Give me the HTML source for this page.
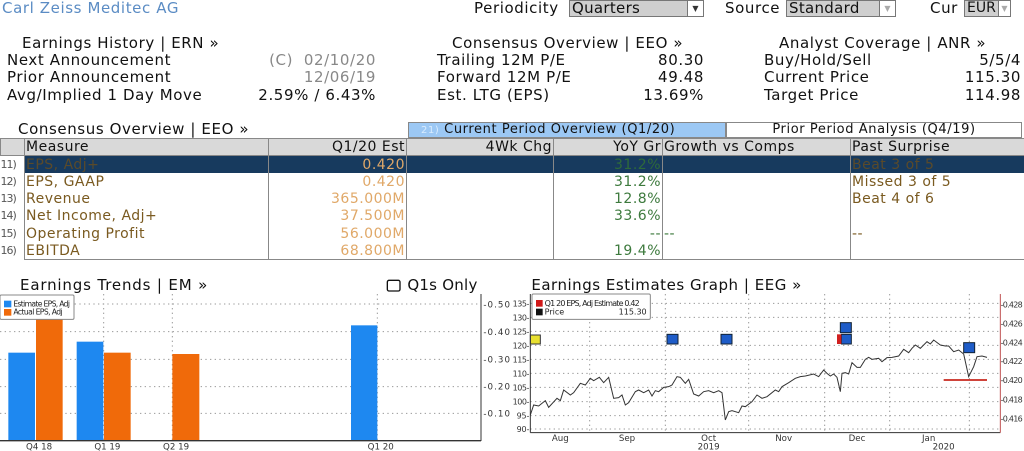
<!DOCTYPE html>
<html><head><meta charset="utf-8">
<style>
*{margin:0;padding:0;box-sizing:border-box}
body{width:1024px;height:451px;overflow:hidden;background:#fff;font-family:"DejaVu Sans","Liberation Sans",sans-serif;color:#111;position:relative}
.a{position:absolute;white-space:nowrap;font-size:15px;line-height:17px;letter-spacing:0.6px}
.r{text-align:right}
.dd{position:absolute;top:0;height:17px;background:#cfcfcf;border:1px solid #777;font-size:15px;line-height:15px;padding-left:2px;letter-spacing:0.3px;overflow:hidden}
.dd i{position:absolute;right:0;top:0;width:16px;height:15px;background:#fff;border-left:1px solid #777;font-style:normal;font-size:8px;text-align:center;line-height:15px;color:#333;letter-spacing:0}
table{position:absolute;left:0;top:138px;width:1024px;border-collapse:collapse;font-size:14px;letter-spacing:0.5px;table-layout:fixed}
td{height:17.3px;line-height:16px;padding:0 1px;white-space:nowrap;overflow:hidden;border-left:1px solid #888;border-right:1px solid #888}
tr.h td{background:#d9d9d9;border:1px solid #888}
tr.s td.x{background:#173a5e;color:#5a4a2a}
.n{font-size:11px;color:#555;border-left:none;letter-spacing:-1px;width:24px;padding:0}
.m{color:#7a5a20;width:244px}
.e{color:#e0a868;text-align:right;width:138px}
.w{width:147px}
.y{color:#3d7a3d;text-align:right;width:109px}
.g{width:188px;color:#3d7a3d}
.p{color:#7a5a20;width:174px}
tr.last td{border-bottom:1px solid #888}
</style></head><body>
<div class="a" style="left:2px;top:0;color:#5b8cc4">Carl Zeiss Meditec AG</div>
<div class="a" style="left:474px;top:0">Periodicity</div>
<div class="dd" style="left:569px;width:135px">Quarters<i>▼</i></div>
<div class="a" style="left:725px;top:0">Source</div>
<div class="dd" style="left:786px;width:110px">Standard<i style="color:#aaa">▼</i></div>
<div class="a" style="left:930px;top:0">Cur</div>
<div class="dd" style="left:964px;width:47px;letter-spacing:0;font-size:14px">EUR<i style="color:#aaa;width:12px">▼</i></div>

<div class="a" style="left:22px;top:35px">Earnings History | ERN »</div>
<div class="a" style="left:7px;top:52px">Next Announcement</div>
<div class="a" style="left:7px;top:69px">Prior Announcement</div>
<div class="a" style="left:7px;top:87px">Avg/Implied 1 Day Move</div>
<div class="a r" style="right:648px;top:52px;color:#888">(C)&nbsp; 02/10/20</div>
<div class="a r" style="right:648px;top:69px;color:#888">12/06/19</div>
<div class="a r" style="right:648px;top:87px">2.59% / 6.43%</div>

<div class="a" style="left:452px;top:35px">Consensus Overview | EEO »</div>
<div class="a" style="left:437px;top:52px">Trailing 12M P/E</div>
<div class="a" style="left:437px;top:69px">Forward 12M P/E</div>
<div class="a" style="left:437px;top:87px">Est. LTG (EPS)</div>
<div class="a r" style="right:320px;top:52px">80.30</div>
<div class="a r" style="right:320px;top:69px">49.48</div>
<div class="a r" style="right:320px;top:87px">13.69%</div>

<div class="a" style="left:779px;top:35px">Analyst Coverage | ANR »</div>
<div class="a" style="left:764px;top:52px">Buy/Hold/Sell</div>
<div class="a" style="left:764px;top:69px">Current Price</div>
<div class="a" style="left:764px;top:87px">Target Price</div>
<div class="a r" style="right:3px;top:52px">5/5/4</div>
<div class="a r" style="right:3px;top:69px">115.30</div>
<div class="a r" style="right:3px;top:87px">114.98</div>

<div class="a" style="left:18px;top:121px">Consensus Overview | EEO »</div>
<div class="a" style="left:408px;top:122px;width:318px;height:16px;background:#9cc8f4;border:1px solid #888;font-size:13px;line-height:14px;padding-left:12px"><span style="color:#d8ecff;font-size:10px">21)</span> Current Period Overview (Q1/20)</div>
<div class="a" style="left:726px;top:122px;width:296px;height:16px;border:1px solid #888;font-size:13px;line-height:14px;text-align:center">Prior Period Analysis (Q4/19)</div>

<table>
<colgroup><col style="width:24px"><col style="width:244px"><col style="width:138px"><col style="width:147px"><col style="width:109px"><col style="width:188px"><col style="width:174px"></colgroup>
<tr class="h"><td class="n" style="background:#d9d9d9"></td><td class="m" style="color:#111">Measure</td><td class="e" style="color:#111">Q1/20 Est</td><td class="w" style="text-align:right">4Wk Chg</td><td class="y" style="color:#111">YoY Gr</td><td class="g" style="color:#111">Growth vs Comps</td><td class="p" style="color:#111">Past Surprise</td></tr>
<tr class="s"><td class="n">11)</td><td class="m x">EPS, Adj+</td><td class="e x" style="color:#e0a868">0.420</td><td class="w x"></td><td class="y x" style="color:#2e6a3a">31.2%</td><td class="g x"></td><td class="p x">Beat 3 of 5</td></tr>
<tr><td class="n">12)</td><td class="m">EPS, GAAP</td><td class="e">0.420</td><td class="w"></td><td class="y">31.2%</td><td class="g"></td><td class="p">Missed 3 of 5</td></tr>
<tr><td class="n">13)</td><td class="m">Revenue</td><td class="e">365.000M</td><td class="w"></td><td class="y">12.8%</td><td class="g"></td><td class="p">Beat 4 of 6</td></tr>
<tr><td class="n">14)</td><td class="m">Net Income, Adj+</td><td class="e">37.500M</td><td class="w"></td><td class="y">33.6%</td><td class="g"></td><td class="p"></td></tr>
<tr><td class="n">15)</td><td class="m">Operating Profit</td><td class="e">56.000M</td><td class="w"></td><td class="y">--</td><td class="g">--</td><td class="p">--</td></tr>
<tr class="last"><td class="n" style="border-bottom:none">16)</td><td class="m">EBITDA</td><td class="e">68.800M</td><td class="w"></td><td class="y">19.4%</td><td class="g"></td><td class="p"></td></tr>
</table>

<svg style="position:absolute;left:0;top:270px" width="512" height="181" viewBox="0 0 1536 543" font-family="DejaVu Sans, sans-serif">
<text x="60" y="60" font-size="45" fill="#111" textLength="562">Earnings Trends | EM »</text>
<rect x="1162" y="31" width="38" height="32" rx="5" fill="none" stroke="#111" stroke-width="4"/>
<text x="1222" y="60" font-size="45" fill="#111" textLength="210">Q1s Only</text>
<g stroke="#999" stroke-width="3" stroke-dasharray="4,10">
<line x1="0" y1="102" x2="1440" y2="102"/><line x1="0" y1="185" x2="1440" y2="185"/><line x1="0" y1="268" x2="1440" y2="268"/><line x1="0" y1="350" x2="1440" y2="350"/><line x1="0" y1="430" x2="1440" y2="430"/>
<line x1="311" y1="72" x2="311" y2="510"/><line x1="517" y1="72" x2="517" y2="510"/><line x1="1132" y1="72" x2="1132" y2="510"/>
</g>
<rect x="25" y="248" width="80" height="264" fill="#1e88f0"/>
<rect x="108" y="130" width="80" height="382" fill="#f06a0a"/>
<rect x="230" y="215" width="80" height="297" fill="#1e88f0"/>
<rect x="312" y="248" width="80" height="264" fill="#f06a0a"/>
<rect x="517" y="252" width="81" height="260" fill="#f06a0a"/>
<rect x="1053" y="166" width="79" height="346" fill="#1e88f0"/>
<rect x="0" y="75" width="222" height="73" rx="4" fill="#fff" stroke="#888" stroke-width="3"/>
<rect x="12" y="92" width="22" height="20" fill="#1e88f0"/><text x="40" y="109" font-size="23" fill="#222" textLength="170">Estimate EPS, Adj</text>
<rect x="12" y="117" width="22" height="20" fill="#f06a0a"/><text x="40" y="134" font-size="23" fill="#222" textLength="148">Actual EPS, Adj</text>
<line x1="1443" y1="72" x2="1443" y2="513" stroke="#333" stroke-width="3"/>
<line x1="0" y1="512" x2="1443" y2="512" stroke="#333" stroke-width="4"/>
<g font-size="26" fill="#333"><text x="1450" y="112" textLength="80">-0.50</text><text x="1450" y="195" textLength="80">-0.40</text><text x="1450" y="277" textLength="80">-0.30</text><text x="1450" y="359" textLength="80">-0.20</text><text x="1450" y="440" textLength="80">-0.10</text>
<text x="78" y="538">Q4 18</text><text x="283" y="538">Q1 19</text><text x="489" y="538">Q2 19</text><text x="1103" y="538">Q1 20</text></g>
</svg>

<svg style="position:absolute;left:512px;top:270px" width="512" height="181" viewBox="0 0 1536 543" font-family="DejaVu Sans, sans-serif">
<text x="58" y="60" font-size="45" fill="#111" textLength="810">Earnings Estimates Graph | EEG »</text>
<g stroke="#999" stroke-width="3" stroke-dasharray="4,10">
<line x1="55" y1="100" x2="1465" y2="100"/><line x1="55" y1="142" x2="1465" y2="142"/><line x1="55" y1="184" x2="1465" y2="184"/><line x1="55" y1="226" x2="1465" y2="226"/><line x1="55" y1="268" x2="1465" y2="268"/><line x1="55" y1="310" x2="1465" y2="310"/><line x1="55" y1="352" x2="1465" y2="352"/><line x1="55" y1="395" x2="1465" y2="395"/><line x1="55" y1="437" x2="1465" y2="437"/><line x1="55" y1="477" x2="1465" y2="477"/>
<line x1="233" y1="72" x2="233" y2="488"/><line x1="460" y1="72" x2="460" y2="488"/><line x1="710" y1="72" x2="710" y2="488"/><line x1="938" y1="72" x2="938" y2="488"/><line x1="1133" y1="72" x2="1133" y2="488"/><line x1="1372" y1="72" x2="1372" y2="488"/>
</g>
<polyline fill="none" stroke="#333" stroke-width="3" points="55,435 65,405 80,408 100,392 110,412 135,385 145,392 155,360 175,375 185,368 205,340 220,345 235,325 245,332 262,322 275,338 290,322 305,385 320,383 330,375 340,405 350,398 370,365 380,360 395,368 410,360 420,378 430,362 440,365 455,352 470,350 480,345 495,320 505,322 520,340 530,328 545,372 560,378 575,365 590,362 605,368 620,362 630,368 640,450 650,425 660,422 680,428 690,408 700,410 720,395 735,375 750,385 765,380 790,360 800,365 810,350 830,338 850,325 865,320 880,318 905,312 920,320 935,300 945,310 955,318 965,312 975,322 985,365 990,310 1000,308 1010,312 1020,278 1035,292 1045,292 1060,268 1070,262 1080,268 1100,265 1110,275 1125,263 1140,262 1160,258 1175,238 1190,248 1200,235 1210,225 1225,235 1245,215 1255,222 1265,210 1285,225 1300,228 1310,228 1325,245 1340,240 1355,252 1370,320 1385,290 1395,260 1410,258 1425,262"/>
<line x1="1295" y1="330" x2="1425" y2="330" stroke="#c8281e" stroke-width="5"/>
<rect x="55" y="195" width="30" height="27" fill="#e8e030" stroke="#333" stroke-width="3"/>
<g fill="#1e5cc8" stroke="#123" stroke-width="3">
<rect x="465" y="193" width="33" height="29"/><rect x="627" y="193" width="33" height="29"/><rect x="988" y="193" width="30" height="29"/><rect x="985" y="158" width="33" height="30"/><rect x="1355" y="218" width="33" height="30"/></g>
<rect x="975" y="193" width="13" height="29" fill="#d02020"/>
<line x1="55" y1="72" x2="55" y2="488" stroke="#333" stroke-width="3"/>
<line x1="55" y1="488" x2="1465" y2="488" stroke="#333" stroke-width="3"/>
<line x1="1465" y1="72" x2="1465" y2="488" stroke="#c05050" stroke-width="3"/>
<rect x="60" y="72" width="355" height="76" rx="4" fill="#fff" stroke="#888" stroke-width="3"/>
<rect x="72" y="90" width="20" height="20" fill="#d01818"/><text x="98" y="108" font-size="24" fill="#222" textLength="285">Q1 20 EPS, Adj Estimate 0.42</text>
<rect x="72" y="116" width="20" height="20" fill="#111"/><text x="98" y="134" font-size="24" fill="#222">Price</text><text x="404" y="134" font-size="24" fill="#222" text-anchor="end">115.30</text>
<g font-size="24" fill="#333"><text x="2" y="109" textLength="50">135-</text><text x="2" y="151" textLength="50">130-</text><text x="2" y="193" textLength="50">125-</text><text x="2" y="235" textLength="50">120-</text><text x="2" y="277" textLength="50">115-</text><text x="2" y="319" textLength="50">110-</text><text x="2" y="361" textLength="50">105-</text><text x="2" y="404" textLength="50">100-</text><text x="14" y="446" textLength="38">95-</text><text x="14" y="486" textLength="38">90-</text></g>
<g font-size="24" fill="#333"><text x="1466" y="112" textLength="66">-0.428</text><text x="1466" y="169" textLength="66">-0.426</text><text x="1466" y="226" textLength="66">-0.424</text><text x="1466" y="282" textLength="66">-0.422</text><text x="1466" y="339" textLength="66">-0.420</text><text x="1466" y="397" textLength="66">-0.418</text><text x="1466" y="454" textLength="66">-0.416</text></g>
<g font-size="26" fill="#333" text-anchor="middle"><text x="145" y="513">Aug</text><text x="345" y="513">Sep</text><text x="590" y="513">Oct</text><text x="815" y="513">Nov</text><text x="1035" y="513">Dec</text><text x="1250" y="513">Jan</text><text x="590" y="538">2019</text><text x="1295" y="538">2020</text></g>
</svg>
</body></html>
